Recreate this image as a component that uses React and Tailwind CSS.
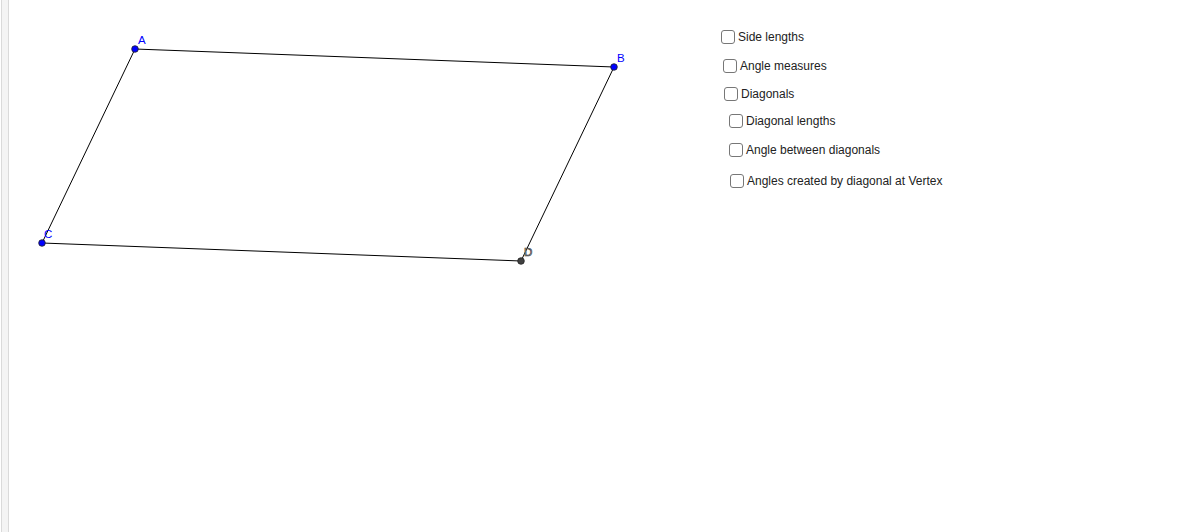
import React from "react";

const boxes = [
  { x: 721, y: 30, label: "Side lengths" },
  { x: 723, y: 59, label: "Angle measures" },
  { x: 724, y: 87, label: "Diagonals" },
  { x: 729, y: 114, label: "Diagonal lengths" },
  { x: 729, y: 143, label: "Angle between diagonals" },
  { x: 730, y: 174, label: "Angles created by diagonal at Vertex" },
];

export default function App() {
  return (
    <div className="flex h-[532px] w-[1201px] bg-white overflow-hidden" style={{ fontFamily: '"Liberation Sans", Arial, sans-serif' }}>
      <div className="ml-px h-full w-[8px] shrink-0 border-x border-[#dadada] bg-[#f4f4f4]" />
      <div className="relative flex-1 h-full">
        <svg className="absolute left-[-9px] top-0" width="1201" height="532" viewBox="0 0 1201 532">
          <polygon points="135,49 614,67 521,261 42,243" fill="none" stroke="#000" strokeWidth="1" />
          <circle cx="135" cy="49" r="3.3" fill="#0000ff" stroke="#222" strokeWidth="0.8" />
          <circle cx="614" cy="67" r="3.3" fill="#0000ff" stroke="#222" strokeWidth="0.8" />
          <circle cx="42" cy="243" r="3.3" fill="#0000ff" stroke="#222" strokeWidth="0.8" />
          <circle cx="521" cy="261" r="3.3" fill="#404040" stroke="#222" strokeWidth="0.8" />
          <text x="138" y="44" fill="#0000ff" fontSize="11.5" fontFamily="Liberation Sans, Arial, sans-serif">A</text>
          <text x="617" y="62" fill="#0000ff" fontSize="11.5" fontFamily="Liberation Sans, Arial, sans-serif">B</text>
          <text x="44" y="238" fill="#0000ff" fontSize="11.5" fontFamily="Liberation Sans, Arial, sans-serif">C</text>
          <text x="524" y="256" fill="#fff" stroke="#333" strokeWidth="0.7" fontSize="11.5" fontFamily="Liberation Sans, Arial, sans-serif">D</text>
        </svg>
        {boxes.map((b) => (
          <label
            key={b.label}
            className="absolute flex items-center gap-[3px] text-[12px] leading-none text-[#222]"
            style={{ left: b.x - 9, top: b.y }}
          >
            <span className="block h-[14px] w-[14px] rounded-[3px] border-[1.5px] border-[#777] bg-white" />
            <span>{b.label}</span>
          </label>
        ))}
      </div>
    </div>
  );
}
